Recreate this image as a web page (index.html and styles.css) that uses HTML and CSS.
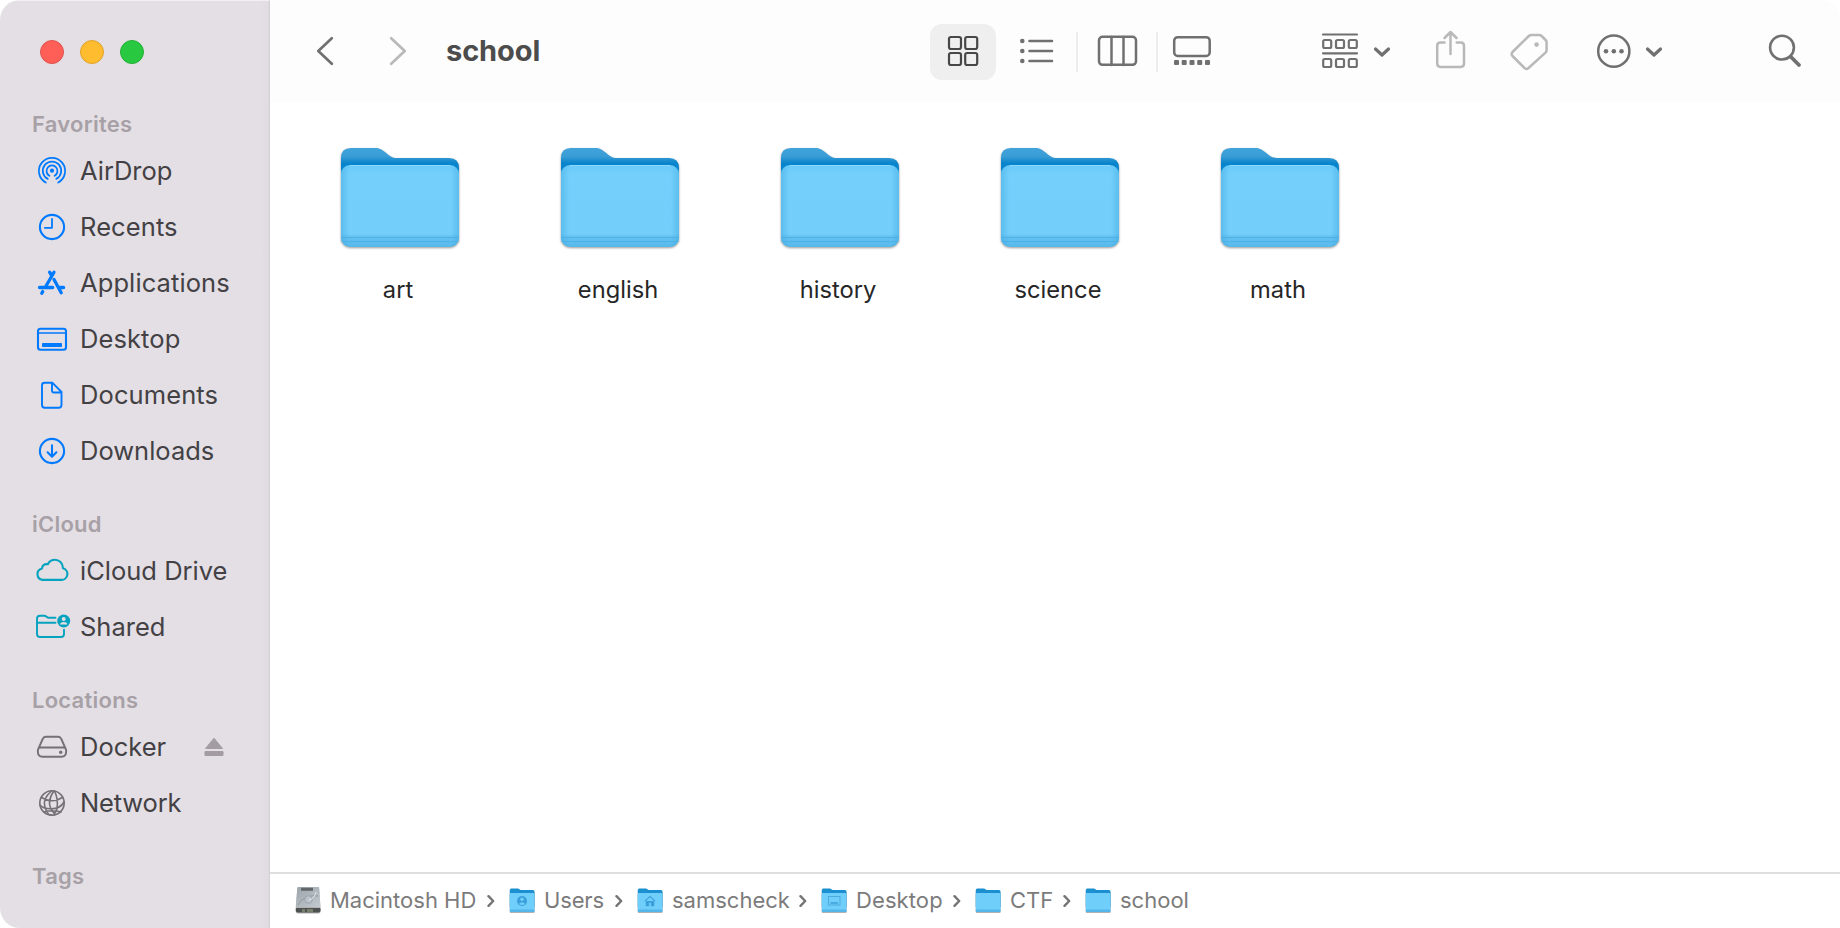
FILE: index.html
```html
<!DOCTYPE html>
<html lang="en">
<head>
<meta charset="utf-8">
<title>school</title>
<link rel="stylesheet" href="styles.css">
</head>
<body>
<svg class="defs" width="0" height="0" aria-hidden="true">
  <defs>
    <linearGradient id="back" x1="0" y1="0" x2="0" y2="1">
      <stop offset="0" stop-color="#41a3dc"/><stop offset=".09" stop-color="#3b9dd5"/><stop offset=".17" stop-color="#0784cb"/><stop offset="1" stop-color="#0784cb"/>
    </linearGradient>
    <linearGradient id="front" x1="0" y1="0" x2="0" y2="1">
      <stop offset="0" stop-color="#6bcaf9"/><stop offset=".12" stop-color="#74cffb"/><stop offset=".84" stop-color="#74cefa"/><stop offset=".87" stop-color="#67c3f1"/><stop offset="1" stop-color="#56b8ea"/>
    </linearGradient>
    <linearGradient id="sides" x1="0" y1="0" x2="1" y2="0">
      <stop offset="0" stop-color="#3ba8e0" stop-opacity=".45"/><stop offset=".07" stop-color="#3ba8e0" stop-opacity="0"/><stop offset=".93" stop-color="#3ba8e0" stop-opacity="0"/><stop offset="1" stop-color="#3ba8e0" stop-opacity=".45"/>
    </linearGradient>
    <linearGradient id="disk" x1="0" y1="0" x2="1" y2="1">
      <stop offset="0" stop-color="#9ba4aa"/><stop offset="1" stop-color="#c3cbd0"/>
    </linearGradient>
    <symbol id="folder" viewBox="0 0 124 108">
      <path fill="url(#back)" d="M3 94V13q0-10 10-10h24c5 0 7 2 10 4 5 4 7 6 12 6h52q10 0 10 10v71z"/>
      <rect x="3" y="20" width="118" height="82" rx="9" fill="url(#front)"/>
      <rect x="3" y="20" width="118" height="82" rx="9" fill="url(#sides)"/>
      <path d="M3.500 92.500h117M3.500 96.500h117" stroke="#4cb1e6" stroke-width="1.200"/>
      <path d="M12 20.500h100" stroke="#8bd9ff" stroke-width="1"/>
    </symbol>
    <symbol id="mini" viewBox="0 0 26 28">
      <path fill="#1b8fd0" d="M.8 20V3q0-1.500 1.500-1.500h6.500c1.500 0 1.700 1.500 3.200 1.500h12q1.500 0 1.500 1.500V20z"/>
      <rect x=".8" y="6" width="24.700" height="19" rx="1.200" fill="#70cefb"/>
      <path d="M.8 22.500h24.700v1.300q0 1.200-1.200 1.200H2q-1.200 0-1.200-1.200z" fill="#55b7e9"/>
    </symbol>
    <symbol id="chev" viewBox="0 0 8 14"><path d="M1.500 2.200 6.200 7 1.500 11.800" fill="none" stroke="#747374" stroke-width="2.400" stroke-linecap="round" stroke-linejoin="round"/></symbol>
  </defs>
</svg>

<div class="window">
  <aside class="sidebar">
    <div class="lights"><span class="light red"></span><span class="light yellow"></span><span class="light green"></span></div>

    <h2 class="heading">Favorites</h2>
    <a class="row"><svg class="icon blue" viewBox="36 -16 32 32"><path d="M45.800 11.500a13.100 13.100 0 1 1 12.400 0M47.700 7.900a9.200 9.200 0 1 1 8.600 0M49.400 4.800a5.500 5.500 0 1 1 5.200 0" stroke-width="1.800"/><circle class="solid" cx="52" cy="-.3" r="2.100"/></svg><span class="label">AirDrop</span></a>
    <a class="row"><svg class="icon blue" viewBox="36 -16 32 32"><circle cx="52" cy="0" r="12.100"/><path d="M52-8V.8H44.800" stroke-width="1.800"/></svg><span class="label wider">Recents</span></a>
    <a class="row"><svg class="icon blue" viewBox="36 -16 32 32"><path stroke-width="3.300" d="M54-10.800 45.300 4.300M49.600-10.800 51.400-7.800M39.500 4.500h13.200M42.700 8.600l-.9 1.600M54-3.500 61.200 9.800M59 4.500h4.600"/></svg><span class="label wider">Applications</span></a>
    <a class="row"><svg class="icon blue" viewBox="36 -16 32 32"><rect x="38" y="-10.300" width="28" height="21" rx="2.500"/><path d="M38-6h28" stroke-width="1.700"/><rect class="solid" x="42" y="4" width="20" height="4" rx=".8"/></svg><span class="label wider">Desktop</span></a>
    <a class="row"><svg class="icon blue" viewBox="36 -16 32 32"><path d="M44.500-12.300h7.800l9.200 9.300V10q0 2.700-2.700 2.700H44.700Q42 12.700 42 10V-9.800q0-2.500 2.500-2.500zM52-12V-4.200q0 1.700 1.700 1.700H61" stroke-width="1.900"/></svg><span class="label wider">Documents</span></a>
    <a class="row"><svg class="icon blue" viewBox="36 -16 32 32"><circle cx="52" cy="0" r="12.100"/><path d="M52-5.600V5.500M47.600 1.300 52 5.700l4.400-4.400"/></svg><span class="label">Downloads</span></a>

    <h2 class="heading">iCloud</h2>
    <a class="row"><svg class="icon teal wide" viewBox="34 -16 38 32"><path d="M42.500 8.900h18.800a5.900 5.900 0 0 0 1.700-11.600C63-8 59-11.200 55-11.200c-3.500 0-5.900 1.800-7.200 4.400-3.200-.6-5.500 1.200-5.800 4.300a5.800 5.800 0 0 0 .5 11.400z"/></svg><span class="label">iCloud Drive</span></a>
    <a class="row"><svg class="icon teal wide" viewBox="34 -16 38 32"><path d="M55.500-9.300H48.500c-1.700 0-2.200-2-4.200-2H40q-3 0-3 3V7q0 3 3 3h21q3 0 3-3V2.800M37-4.200h18.500" stroke-width="1.900"/><circle class="solid" cx="63.700" cy="-6" r="6.500"/><circle class="cut" cx="63.700" cy="-8" r="2"/><path class="cut" d="M60-2.600c.7-3.200 6.700-3.200 7.400 0z"/></svg><span class="label">Shared</span></a>

    <h2 class="heading">Locations</h2>
    <a class="row"><svg class="icon gray" viewBox="36 -16 32 32"><path d="M38.200 2.200 42.700-8q.9-2.300 3-2.300h12.600q2.100 0 3 2.300l4.500 10.200q.4 1 .4 2.300 0 5.200-4.700 5.200h-19Q37.800 9.700 37.800 4.500q0-1.300.4-2.300zM39 .9q1-.4 2-.4h22q1 0 2 .4" stroke-width="1.900"/><circle class="solid" cx="60.700" cy="5.200" r="1.700"/></svg><span class="label">Docker</span><svg class="eject" viewBox="0 0 20 20"><path d="M10 1.200 18.500 11.500h-17z" stroke="#a39da3" stroke-linejoin="round"/><rect x=".5" y="14" width="19" height="5" rx="1.200"/></svg></a>
    <a class="row"><svg class="icon gray" viewBox="36 -16 32 32"><g stroke-width="1.600"><circle cx="52" cy="0" r="12.200"/><path d="M41.500-5.500q10.500 6.500 21 0M40 2q3 3.500 10.500 3.800Q60 6.200 64-1M44 9q8-2.500 17 0M51.500-12Q42-4 45 4.500T52 12M54.500-12q4 8 2.500 18L54 12M53.500-11.500Q47-2 51 6L55 11.500"/></g></svg><span class="label tighter">Network</span></a>

    <h2 class="heading">Tags</h2>
  </aside>

  <main class="main">
    <header class="toolbar">
      <svg class="tool" width="70" height="103" viewBox="290 0 70 103"><path d="M331.800 38.300 318.300 51l13.500 12.700" stroke-width="2.700"/></svg>
      <svg class="tool pale" width="86" height="103" viewBox="360 0 86 103"><path d="M391.200 38.300 404.700 51l-13.500 12.700" stroke-width="2.700"/></svg>
      <h1 class="title">school</h1>
      <div class="views">
        <span class="view selected"><svg class="tool dark" width="66" height="56" viewBox="930 24 66 56"><g stroke-width="2.200"><rect x="949" y="37" width="12" height="12" rx="2"/><rect x="965.200" y="37" width="12" height="12" rx="2"/><rect x="949" y="53" width="12" height="12" rx="2"/><rect x="965.200" y="53" width="12" height="12" rx="2"/></g></svg></span>
        <svg class="tool" width="80" height="56" viewBox="996 24 80 56"><path d="M1029.500 41h22.500M1029.500 51h22.500M1029.500 61h22.500" stroke-width="2.600"/><g class="solid"><circle cx="1022.300" cy="41" r="2.300"/><circle cx="1022.300" cy="51" r="2.300"/><circle cx="1022.300" cy="61" r="2.300"/></g></svg>
        <span class="divider"></span>
        <svg class="tool" width="78" height="56" viewBox="1078 24 78 56"><rect x="1099" y="36.800" width="37" height="28" rx="3.500"/><path d="M1111.500 37v28M1123.500 37v28"/></svg>
        <span class="divider"></span>
        <svg class="tool" width="72" height="56" viewBox="1158 24 72 56"><rect x="1174.200" y="37.200" width="35.500" height="18.800" rx="3.500"/><g class="solid"><rect x="1174" y="60" width="5" height="5" rx="1"/><rect x="1181.700" y="60" width="5" height="5" rx="1"/><rect x="1189.500" y="60" width="5" height="5" rx="1"/><rect x="1197.200" y="60" width="5" height="5" rx="1"/><rect x="1205" y="60" width="5" height="5" rx="1"/></g></svg>
      </div>
      <div class="actions">
        <svg class="tool" width="110" height="103" viewBox="1310 0 110 103"><path d="M1323 34.500h34M1323 53.300h34" stroke-width="2.200"/><g stroke-width="2.200"><rect x="1323.200" y="40" width="8" height="8" rx="1.500"/><rect x="1336" y="40" width="8" height="8" rx="1.500"/><rect x="1348.800" y="40" width="8" height="8" rx="1.500"/><rect x="1323.200" y="59" width="8" height="8" rx="1.500"/><rect x="1336" y="59" width="8" height="8" rx="1.500"/><rect x="1348.800" y="59" width="8" height="8" rx="1.500"/></g><path d="M1375.500 49l6.500 6 6.500-6" stroke-width="3.200"/></svg>
        <svg class="tool pale" width="80" height="103" viewBox="1420 0 80 103"><path d="M1444.500 42.500h-4q-3.300 0-3.300 3.300v17.800q0 3.300 3.300 3.300h20.200q3.300 0 3.300-3.300V45.800q0-3.300-3.300-3.300h-4M1450.500 54V32.500M1444.500 38l6-6 6 6"/></svg>
        <svg class="tool pale" width="80" height="103" viewBox="1500 0 80 103"><path d="M1531.500 35h7.500q1.500 0 2.600 1l4 4q1 1 1 2.500v7.500q0 1.500-1.100 2.600L1528.500 68q-2 1.700-4 0L1512.500 56q-1.700-2 0-4l16.300-16q1.100-1 2.700-1z"/><circle class="solid" cx="1536.600" cy="44.600" r="2.300"/></svg>
        <svg class="tool" width="120" height="103" viewBox="1580 0 120 103"><circle cx="1613.800" cy="51.200" r="15.600"/><g class="solid"><circle cx="1606" cy="51.200" r="2.300"/><circle cx="1613.800" cy="51.200" r="2.300"/><circle cx="1621.500" cy="51.200" r="2.300"/></g><path d="M1647.500 49l6.500 6 6.500-6" stroke-width="3.200"/></svg>
        <svg class="tool" width="140" height="103" viewBox="1700 0 140 103"><circle cx="1782" cy="47.600" r="11.900" stroke-width="2.600"/><path d="M1791 57 1799 65" stroke-width="3.800"/></svg>
      </div>
    </header>

    <section class="files">
      <figure class="file"><svg class="folder"><use href="#folder"/></svg><figcaption>art</figcaption></figure>
      <figure class="file"><svg class="folder"><use href="#folder"/></svg><figcaption>english</figcaption></figure>
      <figure class="file"><svg class="folder"><use href="#folder"/></svg><figcaption>history</figcaption></figure>
      <figure class="file"><svg class="folder"><use href="#folder"/></svg><figcaption>science</figcaption></figure>
      <figure class="file"><svg class="folder"><use href="#folder"/></svg><figcaption>math</figcaption></figure>
    </section>

    <footer class="path">
      <span class="crumb"><svg class="mini" viewBox="0 0 26 28"><path d="M4-.5h18.500q1.500 0 1.700 1.500L25.500 20H.8L2.300 1Q2.500-.5 4-.5z" fill="url(#disk)"/><rect x="6" y=".8" width="12" height="3" fill="#63686b"/><path d="M3 18q3-6 9-8t11-1" fill="none" stroke="#929ba0"/><circle cx="13.500" cy="12.500" r="3.800" fill="#bac3c8" stroke="#9aa4aa"/><path d="M14 13q6-2 7-8" stroke="#e4e9ec" fill="none"/><path d="M.8 21h24.700v2.500q0 2-2 2H2.800q-2 0-2-2z" fill="#4d5150"/><path d="M7 22h3v3H7zM12 22h6v3h-6z" fill="#78806d"/></svg><span class="name">Macintosh HD</span><svg class="chev"><use href="#chev"/></svg></span>
      <span class="crumb"><svg class="mini" viewBox="0 0 26 28"><use href="#mini"/><circle cx="13" cy="14" r="5" fill="#3b9fda"/><circle cx="13" cy="12.300" r="1.700" fill="#70cefb"/><path d="M9.800 17q3.200-3.600 6.400 0-3.200 2.200-6.400 0z" fill="#70cefb"/></svg><span class="name tighter">Users</span><svg class="chev"><use href="#chev"/></svg></span>
      <span class="crumb"><svg class="mini" viewBox="0 0 26 28"><use href="#mini"/><path d="m7.500 14 5.500-5 5.500 5M9 13.500V19h2.800v-3.500h2.400V19H17v-5.500L13 10z" fill="#3b9fda" stroke="#3b9fda" stroke-width=".5"/></svg><span class="name">samscheck</span><svg class="chev"><use href="#chev"/></svg></span>
      <span class="crumb"><svg class="mini" viewBox="0 0 26 28"><use href="#mini"/><rect x="7.500" y="9.500" width="11.500" height="8.500" fill="none" stroke="#4baade"/><path d="M9.500 16h7.500" stroke="#3b9fda" stroke-width="1.500"/></svg><span class="name wider">Desktop</span><svg class="chev"><use href="#chev"/></svg></span>
      <span class="crumb"><svg class="mini"><use href="#mini"/></svg><span class="name">CTF</span><svg class="chev"><use href="#chev"/></svg></span>
      <span class="crumb"><svg class="mini"><use href="#mini"/></svg><span class="name">school</span></span>
    </footer>
  </main>
</div>
</body>
</html>
```
FILE: styles.css
```css
* { box-sizing: border-box; }
body { margin: 0; background: #fff; font-family: Inter, "Liberation Sans", sans-serif; }
h1, h2, figure { margin: 0; }
.defs { display: block; height: 0; }
.window { display: flex; width: 1840px; height: 928px; border-radius: 20px; overflow: hidden; background: #fff; }

.sidebar { width: 270px; flex: none; background: linear-gradient(90deg, #e4dfe4 97%, #e0dbe0 100%); border-right: 1px solid #d3ced3; border-top: 1px solid #f1eff1; }
.lights { display: flex; gap: 16px; height: 104px; padding: 39px 0 0 40px; }
.light { width: 24px; height: 24px; border-radius: 50%; border: 1px solid; }
.red { background: #ff5f57; border-color: #e2524b; }
.yellow { background: #febc2e; border-color: #e0a32a; }
.green { background: #28c840; border-color: #24b038; }
.heading { height: 38px; padding-left: 32px; line-height: 38px; font-size: 22px; font-weight: 600; letter-spacing: .25px; color: #a7a1a7; white-space: nowrap; }
.row + .heading { margin-top: 26px; }
.row { display: flex; align-items: center; height: 56px; padding-left: 36px; font-size: 25.5px; color: #434144; white-space: nowrap; }
.label { padding-bottom: 2px; }
.wider { letter-spacing: .1px; }
.tighter { letter-spacing: -.15px; }
.icon { width: 32px; height: 32px; flex: none; margin-right: 12px; fill: none; stroke: currentColor; stroke-width: 2.100; stroke-linecap: round; stroke-linejoin: round; }
.icon.wide { width: 38px; margin: 0 8px 0 -2px; }
.solid { fill: currentColor; stroke: none; }
.cut { fill: #e4dfe4; stroke: none; }
.blue { color: #007aff; }
.teal { color: #06a3bf; }
.gray { color: #747074; }
.eject { width: 20px; height: 20px; margin-left: auto; margin-right: 45px; fill: #a39da3; }

.main { flex: 1; display: flex; flex-direction: column; min-width: 0; }
.toolbar { display: flex; align-items: center; height: 103px; padding-left: 20px; background: #fdfdfd; }
.tool { flex: none; display: block; color: #707071; fill: none; stroke: currentColor; stroke-width: 2.500; stroke-linecap: round; stroke-linejoin: round; }
.tool .solid { fill: currentColor; stroke: none; }
.tool.pale { color: #b9b9b9; }
.tool.dark { color: #474747; }
.title { width: 484px; padding-bottom: 1px; font-size: 29px; line-height: 102px; font-weight: 700; letter-spacing: -.1px; color: #4c4c4c; }
.views { display: flex; align-items: center; width: 380px; }
.view.selected { border-radius: 12px; background: #efefef; }
.divider { width: 2px; height: 40px; background: #ededed; }
.actions { display: flex; }

.files { flex: 1; display: flex; align-items: flex-start; padding: 42px 1px 0 18px; }
.file { width: 220px; display: flex; flex-direction: column; align-items: center; }
.folder { width: 124px; height: 108px; margin-left: 3px; filter: drop-shadow(0 1.500px 1px rgba(0, 0, 0, .4)); }
.file figcaption { margin-top: 22px; line-height: 30px; font-size: 23.700px; color: #262626; }

.path { display: grid; grid-template-columns: 214px 128px 184px 154px 110px auto; height: 56px; padding-left: 25px; border-top: 2px solid #dfdfdf; align-items: center; }
.crumb { display: flex; align-items: center; font-size: 22px; color: #7c7b7c; white-space: nowrap; }
.name { padding-bottom: 2px; }
.mini { width: 26px; height: 28px; flex: none; margin-right: 9px; filter: drop-shadow(0 1px .5px rgba(0, 0, 0, .3)); }
.chev { width: 8px; height: 14px; margin-left: auto; margin-right: 14px; }
```
